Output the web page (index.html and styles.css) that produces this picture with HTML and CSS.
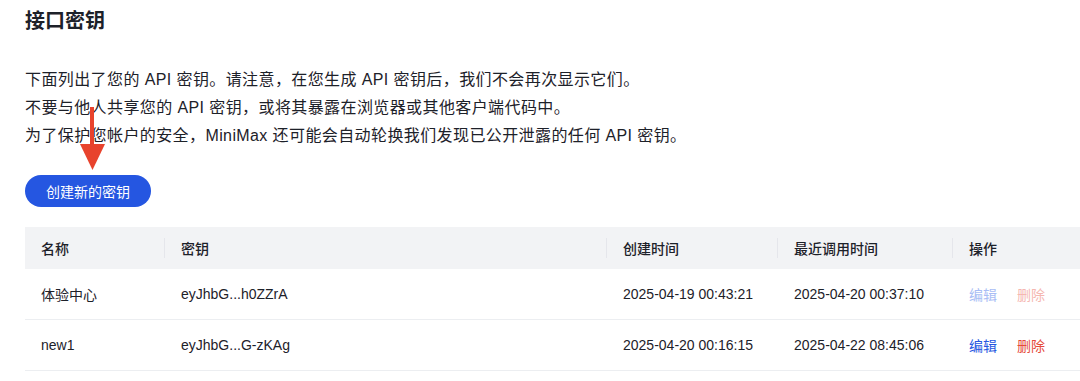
FILE: index.html
```html
<!DOCTYPE html>
<html lang="zh-CN">
<head>
  <meta charset="UTF-8" />
  <meta name="viewport" content="width=device-width, initial-scale=1" />
  <title>接口密钥</title>
  <link rel="stylesheet" href="styles.css">
</head>
<body>
  <h1>接口密钥</h1>
  <div class="intro">
    <p>下面列出了您的 API 密钥。请注意，在您生成 API 密钥后，我们不会再次显示它们。</p>
    <p>不要与他人共享您的 API 密钥，或将其暴露在浏览器或其他客户端代码中。</p>
    <p>为了保护您帐户的安全，MiniMax 还可能会自动轮换我们发现已公开泄露的任何 API 密钥。</p>
  </div>
  <button class="create-btn">创建新的密钥</button>

  <table class="key-table">
    <colgroup>
      <col class="col-name">
      <col class="col-key">
      <col class="col-created">
      <col class="col-used">
      <col class="col-actions">
    </colgroup>
    <thead>
      <tr>
        <th>名称</th>
        <th>密钥</th>
        <th>创建时间</th>
        <th>最近调用时间</th>
        <th>操作</th>
      </tr>
    </thead>
    <tbody>
      <tr>
        <td>体验中心</td>
        <td>eyJhbG...h0ZZrA</td>
        <td>2025-04-19 00:43:21</td>
        <td>2025-04-20 00:37:10</td>
        <td class="actions"><a class="action edit disabled">编辑</a><a class="action delete disabled">删除</a></td>
      </tr>
      <tr>
        <td>new1</td>
        <td>eyJhbG...G-zKAg</td>
        <td>2025-04-20 00:16:15</td>
        <td>2025-04-22 08:45:06</td>
        <td class="actions"><a class="action edit">编辑</a><a class="action delete">删除</a></td>
      </tr>
    </tbody>
  </table>

  <!-- annotation arrow drawn over the text -->
  <svg class="arrow" width="26" height="64" viewBox="0 0 26 64">
    <rect x="10" y="0" width="4" height="40" fill="#e8432d" />
    <polygon points="0,37 25,37 12.5,63" fill="#e8432d" />
  </svg>
</body>
</html>
```

FILE: styles.css
```css
body {
  margin: 0;
  padding: 7px 0 0 25px;
  font-family: "Liberation Sans", "Noto Sans CJK SC", sans-serif;
  color: #1d2129;
  background-color: #ffffff;
  position: relative;
  overflow: hidden;
}
h1 {
  margin: 0;
  font-size: 20px;
  line-height: 28px;
  font-weight: 600;
}
.intro {
  margin-top: 31px;
}
.intro p {
  margin: 0;
  font-size: 16px;
  line-height: 28px;
  letter-spacing: 0.4px;
}
.create-btn {
  display: block;
  margin-top: 25px;
  height: 32px;
  width: 126px;
  padding: 0;
  border: none;
  border-radius: 16px;
  background-color: #2556e1;
  color: #ffffff;
  font-family: "Liberation Sans", "Noto Sans CJK SC", sans-serif;
  font-size: 14px;
  font-weight: 400;
  cursor: pointer;
}
.key-table {
  margin-top: 20px;
  width: 1055px;
  border-collapse: collapse;
  table-layout: fixed;
  font-size: 14px;
}
.col-name { width: 140px; }
.col-key { width: 442px; }
.col-created { width: 171px; }
.col-used { width: 175px; }
.col-actions { width: 127px; }
.key-table th {
  position: relative;
  height: 42px;
  padding: 0 16px;
  background-color: #f2f3f5;
  text-align: left;
  font-weight: 500;
  color: #1d2129;
}
.key-table th:not(:last-child)::before {
  content: "";
  position: absolute;
  right: 0;
  top: 50%;
  width: 1px;
  height: 20px;
  transform: translateY(-50%);
  background-color: #e5e6eb;
}
.key-table td {
  height: 50px;
  padding: 0 16px;
  border-bottom: 1px solid #eceef1;
  color: #1d2129;
}
.actions {
  white-space: nowrap;
}
.action {
  cursor: pointer;
}
.action + .action {
  margin-left: 20px;
}
.edit { color: #2556e1; }
.delete { color: #e5483a; }
.edit.disabled { color: #a9bdf5; }
.delete.disabled { color: #f5b7b1; }
.arrow {
  position: absolute;
  left: 80px;
  top: 107px;
}
```
